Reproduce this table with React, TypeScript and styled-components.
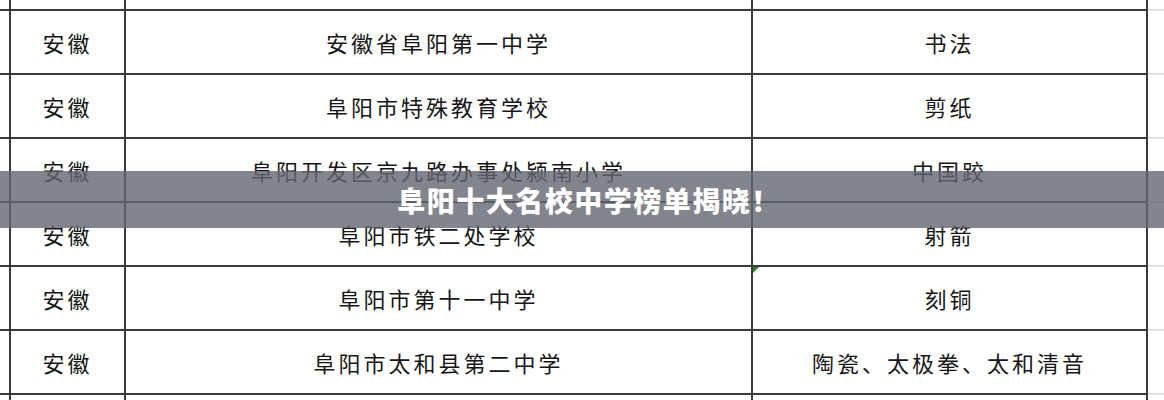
import React from "react";
import styled, { createGlobalStyle } from "styled-components";

const Global = createGlobalStyle`
  html, body { margin: 0; padding: 0; background: #fff; }
  body { width: 1164px; height: 400px; overflow: hidden; }
`;

const Page = styled.div`
  position: relative;
  width: 1164px;
  height: 400px;
  overflow: hidden;
  background: #fff;
  font-family: "Noto Sans CJK SC", "Noto Sans", sans-serif;
`;

const Sheet = styled.div`
  display: flex;
  flex-direction: column;
`;

const Row = styled.div<{ $h: number }>`
  display: grid;
  grid-template-columns: 11px 115px 627px 395px 1fr;
  height: ${(p) => p.$h}px;
  box-sizing: border-box;
`;

const Cell = styled.div<{ $top?: boolean; $last?: boolean }>`
  position: relative;
  box-sizing: border-box;
  display: flex;
  align-items: center;
  justify-content: center;
  border-top: ${(p) => (p.$top ? `2px solid ${p.$last ? "#dfe1e6" : "#3a3a3a"}` : "none")};
  border-right: ${(p) => (p.$last ? "none" : "2px solid #3a3a3a")};
  color: #151515;
  font-size: 22px;
  font-weight: 400;
  letter-spacing: 3px;
  white-space: nowrap;
`;

const Marker = styled.span`
  position: absolute;
  left: 0;
  top: 0;
  width: 0;
  height: 0;
  border-top: 6px solid #1e8a1e;
  border-right: 6px solid transparent;
`;

const Banner = styled.div`
  position: absolute;
  left: 0;
  right: 0;
  top: 171px;
  height: 57px;
  background: rgba(100, 102, 114, 0.8);
  display: flex;
  align-items: center;
  justify-content: center;
  padding-left: 14px;
  box-sizing: border-box;
  color: #fff;
  font-size: 28px;
  font-weight: 900;
  letter-spacing: 1.5px;
`;

const rows = [
  ["安徽", "安徽省阜阳第一中学", "书法"],
  ["安徽", "阜阳市特殊教育学校", "剪纸"],
  ["安徽", "阜阳开发区京九路办事处颍南小学", "中国跤"],
  ["安徽", "阜阳市铁二处学校", "射箭"],
  ["安徽", "阜阳市第十一中学", "刻铜"],
  ["安徽", "阜阳市太和县第二中学", "陶瓷、太极拳、太和清音"],
];

export default function App() {
  return (
    <Page>
      <Global />
      <Sheet>
        <Row $h={9}>
          <Cell />
          <Cell />
          <Cell />
          <Cell />
          <Cell $last />
        </Row>
        {rows.map((r, i) => (
          <Row key={i} $h={64}>
            <Cell $top />
            <Cell $top>{r[0]}</Cell>
            <Cell $top>{r[1]}</Cell>
            <Cell $top>
              {i === 4 && <Marker />}
              {r[2]}
            </Cell>
            <Cell $top $last />
          </Row>
        ))}
        <Row $h={20}>
          <Cell $top />
          <Cell $top />
          <Cell $top />
          <Cell $top />
          <Cell $top $last />
        </Row>
      </Sheet>
      <Banner>阜阳十大名校中学榜单揭晓！</Banner>
    </Page>
  );
}
